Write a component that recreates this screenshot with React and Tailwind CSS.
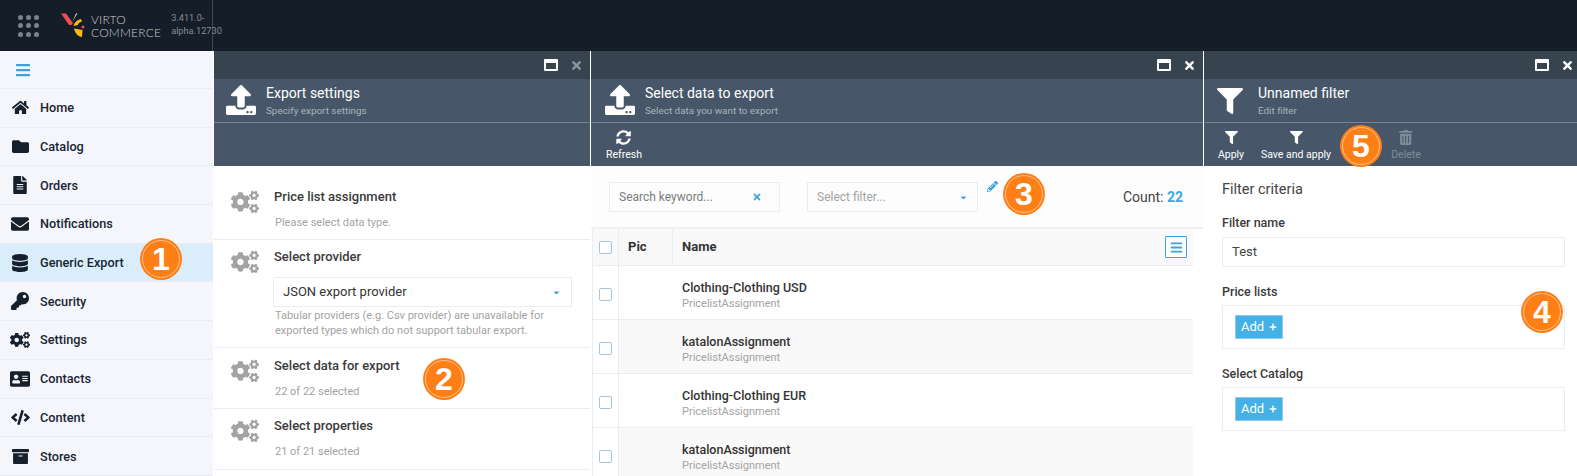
import {
  FaHome, FaFolder, FaFileAlt, FaEnvelope, FaDatabase, FaKey, FaCogs, FaAddressCard, FaCode, FaArchive,
  FaBars, FaUpload, FaFilter, FaTimes, FaSyncAlt, FaTrashAlt, FaPencilAlt, FaCaretDown, FaPlus,
} from "react-icons/fa";

const menu = [
  { label: "Home", icon: FaHome, size: 17 },
  { label: "Catalog", icon: FaFolder, size: 17 },
  { label: "Orders", icon: FaFileAlt, size: 18 },
  { label: "Notifications", icon: FaEnvelope, size: 18 },
  { label: "Generic Export", icon: FaDatabase, size: 18, active: true },
  { label: "Security", icon: FaKey, size: 18 },
  { label: "Settings", icon: FaCogs, size: 20 },
  { label: "Contacts", icon: FaAddressCard, size: 20 },
  { label: "Content", icon: FaCode, size: 19 },
  { label: "Stores", icon: FaArchive, size: 17 },
];

const rows = [
  { name: "Clothing-Clothing USD" },
  { name: "katalonAssignment", alt: true },
  { name: "Clothing-Clothing EUR" },
  { name: "katalonAssignment", alt: true },
];

function Badge({ n, className }) {
  return (
    <div className={`absolute w-[42px] h-[42px] rounded-full bg-[#ff7f17] flex items-center justify-center z-20 ${className}`}>
      <div className="absolute inset-[2px] rounded-full border border-[#ffc08a]" />
      <span className="text-white text-[32px] font-bold font-['Liberation_Sans'] leading-none">{n}</span>
    </div>
  );
}

function Logo() {
  return (
    <svg width="25" height="25" viewBox="0 0 25 25" className="shrink-0">
      <polygon points="0,0.5 5,0.5 12,10 10.5,12 8,12" fill="#ef4f4f" />
      <polygon points="11.5,8.5 15,0.5 16.5,0.5 13,6" fill="#d9d9d9" />
      <path d="M20 6 C16 7 13 10 12.5 13 L17 12 C17 10 19 9 21 8.5 Z" fill="#fdb813" />
      <path d="M13 15.5 L21.5 17 L21 24 C17 24 14 20 13 15.5 Z" fill="#fdb813" />
      <circle cx="22" cy="14" r="1.5" fill="#ef4f4f" />
    </svg>
  );
}

function MaxIcon() {
  return <div className="w-[14px] h-[12px] border-2 border-t-[4px] border-white rounded-[1px]" />;
}

function Blade({ className, title, subtitle, icon: Icon, iconClass, titleX, closeClass = "text-white", barClass, toolbar, children }) {
  return (
    <section className={`h-full flex flex-col border-l border-white ${className}`}>
      <div className={`h-[28px] bg-[#37434f] flex items-center justify-end gap-[12px] shrink-0 ${barClass}`}>
        <MaxIcon />
        <FaTimes size={13} className={closeClass} />
      </div>
      <div className="h-[44px] bg-[#475769] border-b border-[#77838f] flex items-center shrink-0 relative">
        <Icon className={`absolute text-white ${iconClass}`} />
        <div className={titleX}>
          <div className="text-white text-[14px] leading-[18px]">{title}</div>
          <div className="text-[#a9b3bd] text-[9.9px] leading-[14px] mt-[2px]">{subtitle}</div>
        </div>
      </div>
      <div className="h-[43px] bg-[#475769] flex items-start shrink-0">{toolbar}</div>
      <div className="flex-1 bg-white min-h-0 relative">{children}</div>
    </section>
  );
}

function ToolButton({ icon: Icon, label, size = 15, dim, className }) {
  return (
    <div className={`flex flex-col items-center absolute top-[6px] -translate-x-1/2 ${dim ? "text-[#7f8b98]" : "text-white"} ${className}`}>
      <div className="h-[17px] flex items-center"><Icon size={size} /></div>
      <span className="text-[10.5px] leading-[14px] mt-[2px] whitespace-nowrap">{label}</span>
    </div>
  );
}

function Step({ title, sub, children, className }) {
  return (
    <div className={`flex border-b border-[#e8ecf3] pl-[17px] ${className}`}>
      <FaCogs size={28} className="text-[#a3a3a3] shrink-0" />
      <div className="ml-[15px] flex-1 pr-[17px]">
        <div className="text-[#3a3a3a] text-[13px] font-medium leading-[18px]">{title}</div>
        {children}
        {sub && <div className="text-[#a3a3a3] text-[11px] leading-[15px] mt-[9px] ml-[1px]">{sub}</div>}
      </div>
    </div>
  );
}

function AddBox({ className }) {
  return (
    <div className={`h-[44px] border border-[#e8ecf3] pl-[12px] pt-[9px] ${className}`}>
      <div className="w-[48px] h-[24px] bg-[#43b0e6] border border-[#8dc8e8] rounded-[1px] flex items-center justify-center gap-[5px] text-white text-[13px]">
        Add <FaPlus size={8} />
      </div>
    </div>
  );
}

export default function App() {
  return (
    <div className="w-[1577px] h-[476px] overflow-hidden flex flex-col font-['Roboto',sans-serif] bg-white">
      {/* top bar */}
      <header className="h-[51px] bg-[#151d28] flex shrink-0">
        <div className="w-[213px] border-r border-[#3a4859] flex items-center shrink-0">
          <div className="grid grid-cols-3 gap-x-[3px] gap-y-[3.5px] ml-[18px] shrink-0">
            {Array.from({ length: 9 }).map((_, i) => (
              <div key={i} className="w-[5px] h-[5px] rounded-full bg-[#7d838b]" />
            ))}
          </div>
          <div className="ml-[22px] -mt-[1px]"><Logo /></div>
          <div className="ml-[5px] text-[#c9ccd0] text-[12px] leading-[13px] font-light font-['Lato',sans-serif] tracking-[0.2px] shrink-0">
            <div>VIRTO</div>
            <div>COMMERCE</div>
          </div>
          <div className="ml-[10px] w-[40px] shrink-0 text-[#858c95] text-[9.2px] leading-[13px] -mt-[3px] whitespace-nowrap">
            3.411.0-<br />alpha.12730
          </div>
        </div>
      </header>

      <div className="flex-1 flex min-h-0 relative">
        {/* sidebar */}
        <aside className="w-[213px] shrink-0 bg-[#f4f6fb] relative">
          <div className="h-[38px] flex items-center pl-[15px] border-b border-[#e9ecf2]">
            <FaBars size={16} className="text-[#3aa3dc]" />
          </div>
          {menu.map((m) => (
            <div
              key={m.label}
              className={`h-[38.7px] flex items-center border-b border-[#e9ecf2] ${m.active ? "bg-[#d9eefa]" : ""}`}
            >
              <div className="w-[40px] flex justify-center pl-[7px] pr-[7px] shrink-0">
                <m.icon size={m.size} className="text-[#16202c] shrink-0" />
              </div>
              <span className="text-[#1a2533] text-[12.7px] font-medium">{m.label}</span>
            </div>
          ))}
          <Badge n="1" className="left-[140px] top-[187px]" />
        </aside>

        {/* export settings */}
        <Blade
          className="w-[377px] shrink-0"
          title="Export settings"
          subtitle="Specify export settings"
          icon={FaUpload}
          iconClass="left-[12px] top-[6px] text-[30px]"
          titleX="ml-[52px]"
          closeClass="text-[#8a949e]"
          barClass="pr-[7px]"
        >
          <Step title="Price list assignment" sub="Please select data type." className="h-[74px] pt-[22px]" />
          <Step title="Select provider" className="h-[108px] pt-[8px]">
            <div className="h-[30px] mt-[11px] border border-[#e8ecf3] flex items-center justify-between pl-[9px] pr-[10px] text-[#333] text-[13px] w-[299px] -ml-[1px]">
              JSON export provider
              <FaCaretDown size={9} className="text-[#3aa3dc]" />
            </div>
            <div className="text-[#a3a3a3] text-[11px] leading-[15px] mt-[1px] ml-[1px] whitespace-nowrap">
              Tabular providers (e.g. Csv provider) are unavailable for<br />exported types which do not support tabular export.
            </div>
          </Step>
          <Step title="Select data for export" sub="22 of 22 selected" className="h-[61px] pt-[9px]" />
          <Step title="Select properties" sub="21 of 21 selected" className="h-[61px] pt-[8px]" />
          <Badge n="2" className="left-[209px] top-[192px]" />
        </Blade>

        {/* select data */}
        <Blade
          className="w-[613px] shrink-0"
          title="Select data to export"
          subtitle="Select data you want to export"
          icon={FaUpload}
          iconClass="left-[14px] top-[6px] text-[30px]"
          titleX="ml-[54px]"
          barClass="pr-[7px]"
          toolbar={<div className="relative"><ToolButton icon={FaSyncAlt} label="Refresh" className="left-[33px]" /></div>}
        >
          <div className="h-[63px] flex items-start pt-[16px] pl-[18px] relative border-b-2 border-[#eef0f5] bg-[#fdfdfe]">
            <div className="w-[171px] h-[30px] border border-[#e8ecf3] flex items-center justify-between pl-[9px] pr-[17px] text-[#7c7c7c] text-[12px]">
              Search keyword...
              <FaTimes size={10} className="text-[#3aa3dc]" />
            </div>
            <div className="ml-[27px] w-[171px] h-[30px] border border-[#e8ecf3] flex items-center justify-between pl-[9px] pr-[9px] text-[#a3a3a3] text-[12px]">
              Select filter...
              <FaCaretDown size={9} className="text-[#3aa3dc]" />
            </div>
            <FaPencilAlt size={11} className="text-[#3aa3dc] ml-[9px] mt-[-1px]" />
            <div className="ml-auto mr-[20px] mt-[5px] text-[14px] text-[#444]">
              Count: <span className="font-bold text-[#3aa9e0]">22</span>
            </div>
          </div>
          <div className="ml-[1px] w-[601px] border-l border-[#e8ecf3]">
            <div className="h-[37px] flex items-center bg-[#f9f9f9] border-b border-[#e8ecf3] text-[#333] text-[13px] font-bold">
              <div className="w-[26px] h-full flex items-center justify-center border-r border-[#e8ecf3]">
                <div className="w-[13px] h-[13px] rounded-[2px] border border-[#a9c4d6] bg-white" />
              </div>
              <div className="w-[54px] h-full flex items-center pl-[9px] border-r border-[#e8ecf3]">Pic</div>
              <div className="flex-1 pl-[9px]">Name</div>
              <div className="w-[22px] h-[22px] border border-[#3aa3dc] rounded-[1px] flex items-center justify-center mr-[6px] bg-white">
                <FaBars size={13} className="text-[#3aa3dc]" />
              </div>
            </div>
            {rows.map((r, i) => (
              <div key={i} className={`h-[54px] flex border-b border-[#e8ecf3] ${r.alt ? "bg-[#f9f9f9]" : "bg-white"}`}>
                <div className="w-[26px] flex items-center justify-center border-r border-[#e8ecf3] bg-white">
                  <div className="w-[13px] h-[13px] mt-[3px] rounded-[2px] border border-[#a9c4d6] bg-white" />
                </div>
                <div className="pl-[63px] pt-[13px]">
                  <div className="text-[#333] text-[12.5px] font-medium leading-[17px]">{r.name}</div>
                  <div className="text-[#a3a3a3] text-[11px] leading-[14px] mt-[1px]">PricelistAssignment</div>
                </div>
              </div>
            ))}
          </div>
          <Badge n="3" className="left-[412px] top-[7px]" />
        </Blade>

        {/* filter */}
        <Blade
          className="flex-1"
          title="Unnamed filter"
          subtitle="Edit filter"
          icon={FaFilter}
          iconClass="left-[13px] top-[9px] text-[26px]"
          titleX="ml-[54px]"
          barClass="pr-[3px]"
          toolbar={
            <div className="relative">
              <ToolButton icon={FaFilter} label="Apply" size={13} className="left-[27px]" />
              <ToolButton icon={FaFilter} label="Save and apply" size={13} className="left-[92px]" />
              <ToolButton icon={FaTrashAlt} label="Delete" dim size={15} className="left-[202px]" />
            </div>
          }
        >
          <div className="pl-[18px] pt-[15px] pr-[12px]">
            <div className="text-[#444] text-[14.5px] leading-[18px]">Filter criteria</div>
            <div className="text-[#3a3a3a] text-[12.5px] font-medium leading-[16px] mt-[16px]">Filter name</div>
            <div className="h-[30px] mt-[6px] border border-[#e8ecf3] flex items-center pl-[9px] text-[#444] text-[13px]">Test</div>
            <div className="text-[#3a3a3a] text-[12.5px] font-medium leading-[16px] mt-[17px]">Price lists</div>
            <AddBox className="mt-[5px]" />
            <div className="text-[#3a3a3a] text-[12.5px] font-medium leading-[16px] mt-[17px]">Select Catalog</div>
            <AddBox className="mt-[5px]" />
          </div>
          <Badge n="4" className="left-[317px] top-[125px]" />
          <Badge n="5" className="left-[136px] -top-[41px]" />
        </Blade>
      </div>
    </div>
  );
}
